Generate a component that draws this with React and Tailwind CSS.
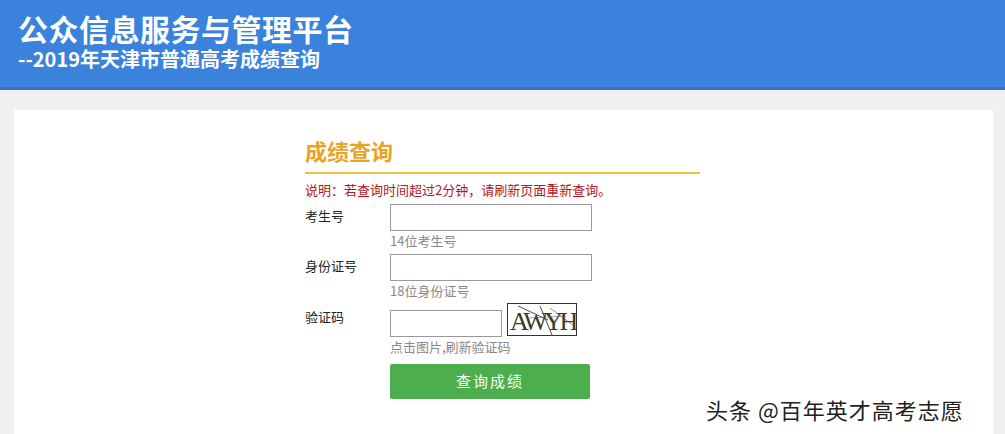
import React from 'react';

const cjk = "font-['Microsoft_YaHei','Noto_Sans_CJK_SC',sans-serif]";

function Captcha() {
  return (
    <div className="w-[70px] h-[33px] border border-[#333] bg-white overflow-hidden">
      <svg width="68" height="31" viewBox="0 0 68 31">
        <text x="2" y="26" fontFamily="'Liberation Serif', serif" fontSize="26" fill="#3a3a2a" letterSpacing="-3.5">AWYH</text>
        <line x1="10" y1="2" x2="40" y2="16" stroke="#222" strokeWidth="0.8" />
        <line x1="32" y1="2" x2="44" y2="31" stroke="#222" strokeWidth="0.8" />
        <line x1="42" y1="4" x2="66" y2="22" stroke="#444" strokeWidth="0.6" />
        <line x1="20" y1="14" x2="58" y2="12" stroke="#555" strokeWidth="0.5" />
      </svg>
    </div>
  );
}

function Field({ label, hint, children }) {
  return (
    <div className="flex">
      <div className="w-[85px] pt-[2px] text-[13px] text-[#222]">{label}</div>
      <div className="flex flex-col">
        {children}
        <div className="text-[13px] text-[#888] leading-[18px] mt-[1px]">{hint}</div>
      </div>
    </div>
  );
}

export default function App() {
  return (
    <div className={`w-[1005px] h-[434px] overflow-hidden bg-[#eff0f2] ${cjk}`}>
      <div className="h-[90px] bg-[#3b82dc] border-b-[3px] border-[#3673c4] pl-[18px] pt-[12px]">
        <h1 className="text-white font-bold text-[30px] leading-[32px] tracking-[0.5px]">公众信息服务与管理平台</h1>
        <p className="text-white font-bold text-[20px] leading-[22px] mt-[4px]">--2019年天津市普通高考成绩查询</p>
      </div>
      <div className="ml-[14px] mr-[12px] mt-[20px] h-[400px] bg-white">
        <div className="ml-[291px] w-[395px] pt-[24px]">
          <h2 className="text-[#e9a224] font-bold text-[22px] leading-[32px] pb-[6px] border-b-2 border-[#f0c040]">成绩查询</h2>
          <p className="text-[#b3161c] text-[13px] leading-[18px] mt-[7px] mb-[5px]">说明：若查询时间超过2分钟，请刷新页面重新查询。</p>
          <div className="flex flex-col gap-[4px]">
            <Field label="考生号" hint="14位考生号">
              <input className="w-[202px] h-[27px] border border-[#999] bg-white" />
            </Field>
            <Field label="身份证号" hint="18位身份证号">
              <input className="w-[202px] h-[27px] border border-[#999] bg-white" />
            </Field>
            <div className="flex mt-[-1px]">
              <div className="w-[85px] pt-[4px] text-[13px] text-[#222]">验证码</div>
              <div className="flex flex-col">
                <div className="flex items-end gap-[5px]">
                  <input className="w-[112px] h-[27px] mb-[-1px] border border-[#999] bg-white" />
                  <Captcha />
                </div>
                <div className="text-[13px] text-[#888] leading-[18px] mt-[2px]">点击图片,刷新验证码</div>
                <button className="mt-[8px] w-[200px] h-[35px] rounded-[2px] bg-[#4cae4c] text-white text-[15px] tracking-[2px]">查询成绩</button>
              </div>
            </div>
          </div>
        </div>
      </div>
      <div className="absolute left-[706px] top-[395px] text-[22px] tracking-[1px] leading-[28px] text-[#222] [text-shadow:1px_1px_0_#fff,-1px_-1px_0_#fff]">头条 @百年英才高考志愿</div>
    </div>
  );
}
